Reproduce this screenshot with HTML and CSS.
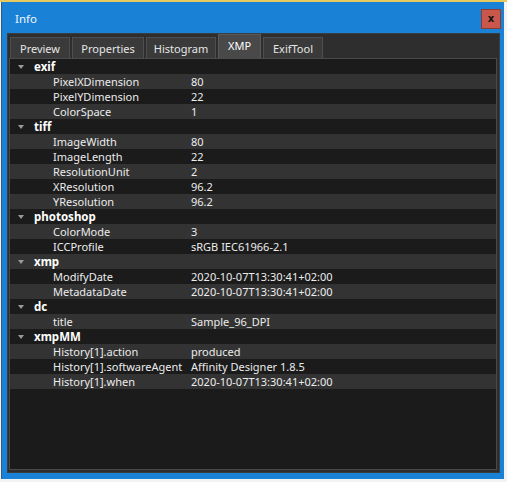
FILE: index.html
```html
<!DOCTYPE html>
<html>
<head>
<meta charset="utf-8">
<link rel="stylesheet" href="styles.css">
</head>
<body>
<div class="window">
  <div class="titlebar">
    <span class="title">Info</span>
    <span class="close">x</span>
  </div>
  <div class="panel">
    <div class="tabs">
      <div class="tab t1">Preview</div>
      <div class="tab t2">Properties</div>
      <div class="tab t3">Histogram</div>
      <div class="tab t4 active">XMP</div>
      <div class="tab t5">ExifTool</div>
    </div>
    <div class="tree">
      <div class="row group"><span class="arrow"></span><span class="gname">exif</span></div>
      <div class="row"><span class="key">PixelXDimension</span><span class="val">80</span></div>
      <div class="row"><span class="key">PixelYDimension</span><span class="val">22</span></div>
      <div class="row"><span class="key">ColorSpace</span><span class="val">1</span></div>
      <div class="row group"><span class="arrow"></span><span class="gname">tiff</span></div>
      <div class="row"><span class="key">ImageWidth</span><span class="val">80</span></div>
      <div class="row"><span class="key">ImageLength</span><span class="val">22</span></div>
      <div class="row"><span class="key">ResolutionUnit</span><span class="val">2</span></div>
      <div class="row"><span class="key">XResolution</span><span class="val">96.2</span></div>
      <div class="row"><span class="key">YResolution</span><span class="val">96.2</span></div>
      <div class="row group"><span class="arrow"></span><span class="gname">photoshop</span></div>
      <div class="row"><span class="key">ColorMode</span><span class="val">3</span></div>
      <div class="row"><span class="key">ICCProfile</span><span class="val">sRGB IEC61966-2.1</span></div>
      <div class="row group"><span class="arrow"></span><span class="gname">xmp</span></div>
      <div class="row"><span class="key">ModifyDate</span><span class="val">2020-10-07T13:30:41+02:00</span></div>
      <div class="row"><span class="key">MetadataDate</span><span class="val">2020-10-07T13:30:41+02:00</span></div>
      <div class="row group"><span class="arrow"></span><span class="gname">dc</span></div>
      <div class="row"><span class="key">title</span><span class="val">Sample_96_DPI</span></div>
      <div class="row group"><span class="arrow"></span><span class="gname">xmpMM</span></div>
      <div class="row"><span class="key">History[1].action</span><span class="val">produced</span></div>
      <div class="row"><span class="key">History[1].softwareAgent</span><span class="val">Affinity Designer 1.8.5</span></div>
      <div class="row"><span class="key">History[1].when</span><span class="val">2020-10-07T13:30:41+02:00</span></div>
    </div>
  </div>
</div>
</body>
</html>
```

FILE: styles.css
```css
html, body {
  margin: 0;
  padding: 0;
}
body {
  background: #f3f3f3;
  border-top: 2px solid #e8c960;
  font-family: "Noto Sans", "Open Sans", sans-serif;
  font-size: 11px;
  height: 480px;
  overflow: hidden;
}
.window {
  margin-left: 1px;
  width: 503px;
  height: 477px;
  background: #1a82d6;
  border-left: 1px solid #2c5d8a;
  box-sizing: border-box;
  padding: 0 4px 6px 5px;
  display: flex;
  flex-direction: column;
}
.titlebar {
  height: 31px;
  display: flex;
  align-items: center;
  justify-content: space-between;
  flex: none;
}
.title {
  color: #f2f6fb;
  font-size: 11.5px;
  margin-left: 8px;
  margin-top: 1px;
}
.close {
  width: 18px;
  height: 18px;
  background: #c9574c;
  border: 1px solid #8c3a32;
  color: #111;
  font-family: "DejaVu Sans", sans-serif;
  font-weight: bold;
  font-size: 10px;
  display: flex;
  align-items: center;
  justify-content: center;
  line-height: 1;
  margin-top: 3px;
  margin-right: -1px;
}
.panel {
  flex: 1;
  background: #2e2e2e;
  border: 1px solid #3c3c3c;
  display: flex;
  flex-direction: column;
  padding: 0 2px 2px 1px;
}
.tabs {
  display: flex;
  align-items: flex-end;
  height: 24px;
  flex: none;
  gap: 2px;
  padding-left: 1px;
}
.tab {
  background: #3a3a3a;
  border: 1px solid #4e4e4e;
  border-bottom: none;
  color: #e6e6e6;
  display: flex;
  align-items: center;
  justify-content: center;
  box-sizing: border-box;
  height: 21px;
}
.t1 { width: 60px; }
.t2 { width: 72px; }
.t3 { width: 70px; }
.t4 { width: 43px; }
.t5 { width: 60px; }
.tab.active {
  height: 24px;
  background: #494949;
  border-color: #5a5a5a;
  color: #ffffff;
  padding-bottom: 3px;
}
.tree {
  flex: 1;
  background: #1b1b1b;
  border: 1px solid #4a4a4a;
}
.row {
  height: 15px;
  display: flex;
  align-items: center;
  color: #ececec;
  white-space: nowrap;
  line-height: 15px;
}
.row:nth-child(odd) {
  background: #1b1b1b;
}
.row:nth-child(even) {
  background: #333333;
}
.arrow {
  width: 0;
  height: 0;
  border-left: 3px solid transparent;
  border-right: 3px solid transparent;
  border-top: 4px solid #9a9a9a;
  margin-left: 8px;
  margin-right: 10px;
}
.gname {
  font-weight: bold;
  font-size: 11.5px;
  color: #ffffff;
}
.key {
  width: 138px;
  margin-left: 43px;
  flex: none;
}
.val {
  margin-left: 0;
}
```
